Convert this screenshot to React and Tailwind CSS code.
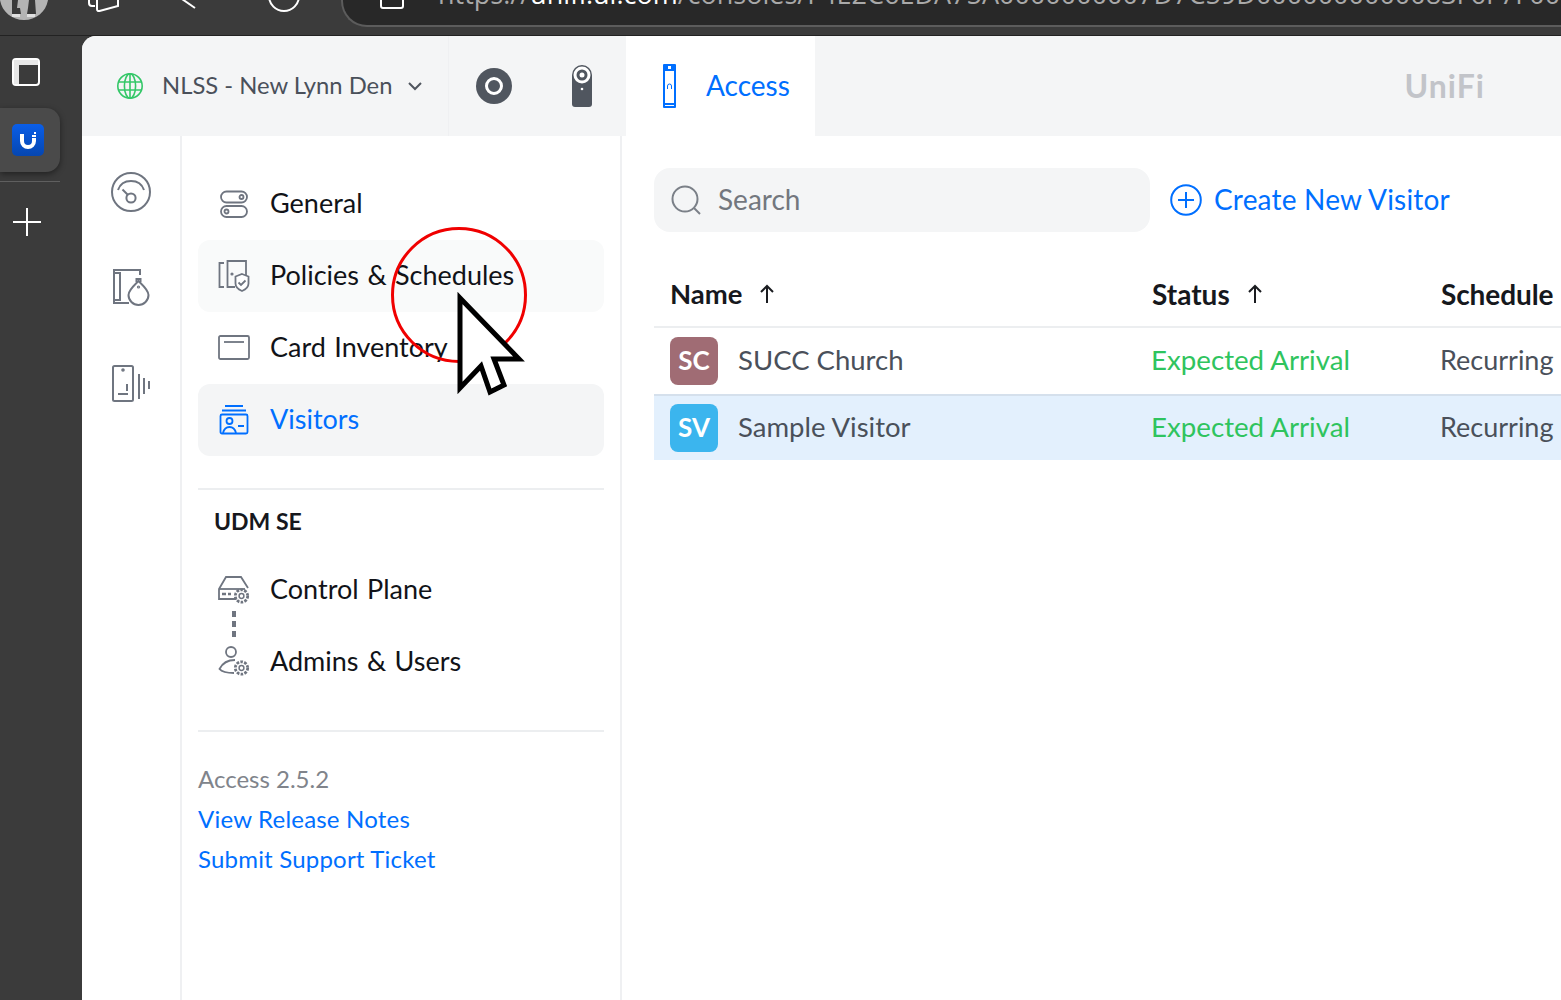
const stroke = "#6f7580";

const TabIcon = () => (
  <svg width="30" height="30" viewBox="0 0 30 30" fill="none">
    <rect x="2" y="2" width="26" height="26" rx="3" stroke="white" strokeWidth="2" />
    <path d="M3 3h24v5H8v19H3z" fill="#e8e8e8" />
  </svg>
);

const UniFiTile = () => (
  <svg width="32" height="32" viewBox="0 0 32 32">
    <defs>
      <linearGradient id="uni" x1="0" y1="0" x2="0" y2="1">
        <stop offset="0" stopColor="#0a5ee8" />
        <stop offset="1" stopColor="#0546b0" />
      </linearGradient>
    </defs>
    <rect width="32" height="32" rx="5" fill="url(#uni)" />
    <path d="M8 10h4v7a4 4 0 0 0 8 0v-3h4v3a8 8 0 0 1-16 0z" fill="white" />
    <path d="M22 8h2v2h-2zM20 11h2v2h-2zM22 11h2v2h-2z" fill="white" />
  </svg>
);

const GlobeIcon = () => (
  <svg width="28" height="28" viewBox="0 0 28 28" fill="none" stroke="#34c768" strokeWidth="1.6">
    <circle cx="14" cy="14" r="12.2" />
    <ellipse cx="14" cy="14" rx="5.6" ry="12.2" />
    <path d="M14 2v24M2.6 10h22.8M2.6 18h22.8" />
  </svg>
);

const GaugeIcon = () => (
  <svg width="40" height="40" viewBox="0 0 40 40" fill="none" stroke={stroke} strokeWidth="2">
    <circle cx="20" cy="20" r="19" />
    <path d="M7 18c2-6 7-9 13-9s11 3 13 9" />
    <circle cx="20" cy="26" r="4.6" />
    <path d="M16.5 22.5l-5-5" />
  </svg>
);

const DoorTagIcon = () => (
  <svg width="38" height="38" viewBox="0 0 38 38" fill="none" stroke={stroke} strokeWidth="2">
    <path d="M28 6V1H2v33h15" />
    <path d="M2 4h6v27H2" />
    <path d="M24.500 13v-3h4v3" />
    <path d="M26.500 12c4 4 10 9 10 14a10 10 0 0 1-20 0c0-5 6-10 10-14z" fill="white" />
    <circle cx="26.500" cy="18" r="0.6" />
  </svg>
);

const PhoneWaveIcon = () => (
  <svg width="38" height="38" viewBox="0 0 38 38" fill="none" stroke={stroke} strokeWidth="2">
    <rect x="1" y="1" width="20" height="35" rx="1.5" />
    <path d="M6 29h10M15 19v7M21 14v16M27 9v25M32 13v16M37 16v8" />
    <circle cx="11" cy="5" r="0.8" />
  </svg>
);

const TogglesIcon = () => (
  <svg width="30" height="30" viewBox="0 0 30 30" fill="none" stroke={stroke} strokeWidth="1.8">
    <rect x="2" y="2.5" width="26" height="11" rx="5.5" />
    <rect x="2" y="17" width="26" height="11" rx="5.5" />
    <circle cx="22.5" cy="8" r="2" />
    <circle cx="7.5" cy="22.5" r="2" />
  </svg>
);

const DoorShieldIcon = () => (
  <svg width="32" height="32" viewBox="0 0 32 32" fill="none" stroke={stroke} strokeWidth="1.8">
    <path d="M6 3H1.500v24H6" />
    <path d="M28 15V1H9.500v26H17" />
    <circle cx="14" cy="14" r="0.7" />
    <path d="M24 14l6.500 2.500v7c0 4-3 6-6.500 7.500-3.500-1.500-6.500-3.500-6.500-7.500v-7z" fill="white" />
    <path d="M20.500 22.500l2.500 2.500 4.500-4.500" />
  </svg>
);

const CardIcon = () => (
  <svg width="32" height="26" viewBox="0 0 32 26" fill="none" stroke={stroke} strokeWidth="1.8">
    <rect x="1" y="1" width="30" height="23" rx="1.500" />
    <path d="M6 7h20" />
  </svg>
);

const VisitorIcon = () => (
  <svg width="30" height="30" viewBox="0 0 30 30" fill="none" stroke="#006fff" strokeWidth="1.8">
    <path d="M6 1h18M3 5.500h24" />
    <rect x="1.500" y="9.500" width="27" height="19" rx="1.500" />
    <circle cx="10.500" cy="16" r="3" />
    <path d="M4 28c1-4 3-6 6.500-6s5.500 2 6.500 6M19 21h6" />
  </svg>
);

const Gear = () => (
  <g>
    <circle cx="24.500" cy="23" r="6.200" fill="white" strokeDasharray="2.600 1.300" strokeWidth="2.800" />
    <circle cx="24.500" cy="23" r="2.400" strokeWidth="1.500" />
  </g>
);

const PlaneIcon = () => (
  <svg width="34" height="34" viewBox="0 0 34 34" fill="none" stroke={stroke} strokeWidth="1.800">
    <path d="M20 26H2V16L9 4H24L31 15" />
    <path d="M2 16H28" />
    <path d="M5 21h4M11 21h3" strokeWidth="2.500" />
    <Gear />
  </svg>
);

const AdminIcon = () => (
  <svg width="34" height="34" viewBox="0 0 34 34" fill="none" stroke={stroke} strokeWidth="1.800">
    <circle cx="14" cy="7" r="5" />
    <path d="M18 15C10 15 5 19 2.500 24C5 27 10 28 17 28" />
    <Gear />
  </svg>
);

const NavItem = ({ icon, label, active, hover }) => (
  <div
    className={`flex items-center h-[72px] rounded-[12px] ${active ? "bg-[#f4f5f6] text-[#006fff]" : "text-[#111318]"} ${hover ? "bg-[#f9fafa]" : ""}`}
  >
    <div className="w-[72px] flex justify-center shrink-0">{icon}</div>
    <span className="text-[27px] pb-[2px] [word-spacing:1.5px]">{label}</span>
  </div>
);

const SortArrow = () => (
  <svg width="16" height="20" viewBox="0 0 16 20" fill="none" stroke="#1a1c20" strokeWidth="2">
    <path d="M8 19V2M2 8l6-6 6 6" />
  </svg>
);

const rows = [
  { initials: "SC", name: "SUCC Church", tile: "bg-[#a06c74]", row: "h-[68px] border-b-2 border-[#d5e0ec]" },
  { initials: "SV", name: "Sample Visitor", tile: "bg-[#3bb5ee]", row: "h-[64px] bg-[#e3f0fd]" },
];

export default function App() {
  return (
    <div className="relative w-[1561px] h-[1000px] overflow-hidden bg-[#3b3b3b] font-['Lato',sans-serif]">
      {/* browser chrome, mostly cut off by the crop */}
      <div className="h-[36px] flex items-start overflow-hidden border-b border-[#222]">
        <svg className="shrink-0" width="48" height="20" viewBox="0 0 48 20">
          <path d="M0 0h48c-2 12-12 20-24 20S2 12 0 0z" fill="#b4b4b4" />
          <path d="M12 0h6l-1 8h3l1 6H12zM29 0h6l1 14h-9l1-6z" fill="#3a3a3a" />
          <path d="M12 14h8v3h-8zM27 14h8v3h-8z" fill="#e0e0e0" />
        </svg>
        <svg className="ml-[32px] shrink-0" width="240" height="14" viewBox="0 0 240 14" fill="none" stroke="white" strokeWidth="2">
          <path d="M9 0v3q0 3 3 3h3" />
          <path d="M17 0v9q0 2.500 2.500 2L38 6V0" />
          <path d="M102 -1L115 8" />
          <circle cx="204" cy="-4" r="15" />
        </svg>
        <div className="ml-[21px] flex-1 h-[60px] -mt-[33px] pl-[95px] rounded-bl-[26px] bg-[#282828] border-l-2 border-b-2 border-[#5c5c5c] flex items-end whitespace-nowrap text-[27px] leading-[32px] pb-[15px] text-[#a9a9a9] font-['Open_Sans',sans-serif] relative">
          <div className="absolute left-[37px] bottom-[16px] w-[24px] h-[24px] border-2 border-white rounded-[3px]" />
          <span>https://</span>
          <span className="text-white">unifi.ui.com</span>
          <span>/consoles/F4E2C6EDA75A0000000007D7C59D0000000000083F6F7F000000</span>
        </div>
      </div>

      <div className="flex h-[964px]">
        {/* left rail */}
        <div className="w-[82px] shrink-0 pt-[21px]">
          <div className="pl-[11px]">
            <TabIcon />
          </div>
          <div className="mt-[21px] w-[60px] h-[64px] rounded-r-[14px] bg-[#4a4a4a] shadow-[0_2px_6px_rgba(0,0,0,0.45)] flex items-center pl-[12px]">
            <UniFiTile />
          </div>
          <div className="mt-[9px] w-[60px] h-px bg-[#5f5f5f]" />
          <div className="mt-[26px] pl-[13px]">
            <svg width="28" height="28" viewBox="0 0 28 28" stroke="white" strokeWidth="2">
              <path d="M14 0v28M0 14h28" />
            </svg>
          </div>
        </div>

        {/* console panel */}
        <div className="flex-1 min-w-0 bg-white rounded-tl-[14px] overflow-hidden flex flex-col">
          <div className="h-[100px] shrink-0 flex bg-[#f4f5f6]">
            <div className="w-[367px] border-r border-[#eff0f2] flex items-center pl-[34px] text-[#4a505a]">
              <GlobeIcon />
              <span className="ml-[18px] text-[23.8px]">NLSS - New Lynn Den</span>
              <svg className="ml-[15px]" width="16" height="10" viewBox="0 0 16 10" fill="none" stroke="#50565f" strokeWidth="2">
                <path d="M2 2l6 6 6-6" />
              </svg>
            </div>
            <div className="w-[177px] flex items-center pl-[27px]">
              <div className="w-[36px] h-[36px] rounded-full bg-[#50565f] flex items-center justify-center">
                <div className="w-[18px] h-[18px] rounded-full border-[3px] border-white" />
              </div>
              <svg className="ml-[60px]" width="20" height="42" viewBox="0 0 20 42">
                <path d="M0 10a10 10 0 0 1 20 0v29q0 3-3 3H3q-3 0-3-3z" fill="#50565f" />
                <circle cx="10" cy="10" r="8.500" fill="white" />
                <circle cx="10" cy="10" r="5.500" fill="#50565f" />
                <circle cx="10" cy="10" r="2.500" fill="white" />
                <circle cx="10" cy="24" r="1.300" fill="white" />
              </svg>
            </div>
            <div className="w-[189px] bg-white flex items-center pl-[37px]">
              <svg width="14" height="44" viewBox="0 0 14 44">
                <rect width="13" height="44" rx="1" fill="#006fff" />
                <rect x="2" y="7" width="9" height="32" fill="white" />
                <rect x="5" y="2" width="3" height="3" fill="white" />
                <path d="M4.500 25v-3a2 2 0 0 1 4 0v3" stroke="#006fff" fill="none" />
                <rect x="2" y="41" width="9" height="1" fill="white" />
              </svg>
              <span className="ml-[29px] pb-[2px] text-[28px] text-[#006fff]">Access</span>
            </div>
            <div className="flex-1 flex items-center justify-end pr-[76px]">
              <span className="text-[32px] font-bold text-[#c2c4c9] tracking-[1px]">UniFi</span>
            </div>
          </div>

          <div className="flex flex-1 min-h-0">
            {/* icon column */}
            <div className="w-[100px] shrink-0 border-r-2 border-[#eff0f2] flex flex-col items-center pt-[36px]">
              <GaugeIcon />
              <div className="mt-[57px]">
                <DoorTagIcon />
              </div>
              <div className="mt-[58px]">
                <PhoneWaveIcon />
              </div>
            </div>

            {/* settings nav */}
            <div className="w-[440px] shrink-0 border-r-2 border-[#eff0f2] px-[16px] pt-[32px]">
              <NavItem icon={<TogglesIcon />} label="General" />
              <NavItem icon={<DoorShieldIcon />} label="Policies & Schedules" hover />
              <NavItem icon={<CardIcon />} label="Card Inventory" />
              <NavItem icon={<VisitorIcon />} label="Visitors" active />
              <div className="mt-[32px] border-t-2 border-[#eceef0] pt-[15px] pb-[1px] pl-[16px] text-[23px] leading-[32px] font-bold text-[#16181d]">
                UDM SE
              </div>
              <div className="relative mt-[16px]">
                <NavItem icon={<PlaneIcon />} label="Control Plane" />
                <NavItem icon={<AdminIcon />} label="Admins & Users" />
                <svg className="absolute left-[34px] top-[57px]" width="4" height="28" viewBox="0 0 4 28" stroke="#6f7580" strokeWidth="4">
                  <path d="M2 0v28" strokeDasharray="6 4" />
                </svg>
              </div>
              <div className="mt-[32px] border-t-2 border-[#eceef0] pt-[27px] text-[24px] leading-[40px] tracking-[0.2px]">
                <div className="text-[#80848b] tracking-normal">Access 2.5.2</div>
                <div className="text-[#006fff]">View Release Notes</div>
                <div className="text-[#006fff]">Submit Support Ticket</div>
              </div>
            </div>

            {/* visitors table */}
            <div className="flex-1 min-w-0 pl-[32px] pt-[32px]">
              <div className="flex items-center">
                <div className="w-[496px] h-[64px] rounded-[16px] bg-[#f4f5f6] flex items-center pl-[16px] shrink-0">
                  <svg width="32" height="32" viewBox="0 0 32 32" fill="none" stroke="#7b8088" strokeWidth="2">
                    <circle cx="15" cy="15" r="12.500" />
                    <path d="M24 24l6 6" />
                  </svg>
                  <span className="ml-[16px] pb-[2px] text-[28px] text-[#73777e]">Search</span>
                </div>
                <svg className="ml-[20px] shrink-0" width="32" height="32" viewBox="0 0 32 32" fill="none" stroke="#006fff" strokeWidth="2">
                  <circle cx="16" cy="16" r="14.800" />
                  <path d="M16 8v16M8 16h16" />
                </svg>
                <span className="ml-[12px] pb-[2px] text-[28px] tracking-[0.2px] text-[#006fff] whitespace-nowrap">Create New Visitor</span>
              </div>

              <div className="mt-[32px] h-[64px] border-b-2 border-[#eceef0] pl-[16px] flex items-center">
                <div className="grid grid-cols-[482px_289px_1fr] w-full pb-[2px] text-[27.5px] font-bold text-[#16181d] items-center">
                  <div className="flex items-center gap-[16px]">Name <SortArrow /></div>
                  <div className="flex items-center gap-[17px] text-[28px]">Status <SortArrow /></div>
                  <div className="whitespace-nowrap text-[28px] tracking-[-0.1px]">Schedule</div>
                </div>
              </div>

              {rows.map((r) => (
                <div key={r.initials} className={`${r.row} pl-[16px] flex items-center`}>
                  <div className="grid grid-cols-[481px_289px_1fr] w-full items-center whitespace-nowrap">
                    <div className="flex items-center text-[27.5px] text-[#4a505a]">
                      <div className={`w-[48px] h-[48px] pb-[2px] rounded-[8px] ${r.tile} text-white text-[26px] font-bold flex items-center justify-center`}>
                        {r.initials}
                      </div>
                      <span className="ml-[20px] pb-[2px]">{r.name}</span>
                    </div>
                    <div className="text-[27.7px] pb-[2px] text-[#2fc45e]">Expected Arrival</div>
                    <div className="text-[27px] pb-[2px] text-[#4a505a]">Recurring</div>
                  </div>
                </div>
              ))}
            </div>
          </div>
        </div>
      </div>

      {/* recording overlay: click highlight and cursor */}
      <div className="absolute left-[391px] top-[227px] w-[136px] h-[136px] rounded-full border-[3px] border-[#f00000]" />
      <svg className="absolute left-[452px] top-[288px]" width="84" height="112" viewBox="0 0 84 112">
        <path d="M8 10L67 71H42L52 97L38 104L29 78L8 100Z" fill="white" stroke="black" strokeWidth="5" />
      </svg>
    </div>
  );
}
